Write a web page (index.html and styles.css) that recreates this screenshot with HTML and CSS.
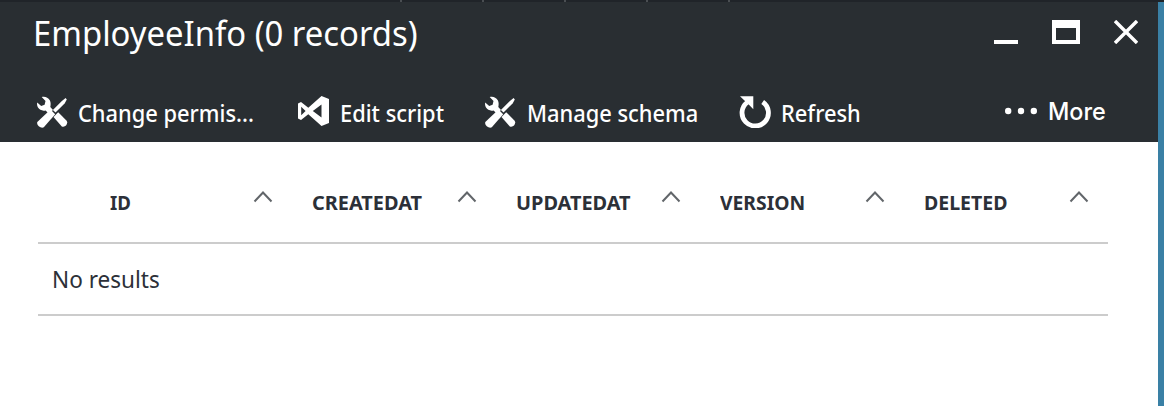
FILE: index.html
```html
<!DOCTYPE html>
<html lang="en">
<head>
<meta charset="utf-8">
<title>EmployeeInfo</title>
<link rel="stylesheet" href="styles.css">
</head>
<body>
<svg class="defs" aria-hidden="true">
  <symbol id="tools" viewBox="0 0 32 32">
    <path d="M5.700 1C8.500 .1 12 1 13.800 4.300C15 6.600 14.700 9.200 14.300 11L17 14L12.800 17.800L9.600 14.400C6.500 15.200 3.500 14 2 11.600C1.100 10 .8 8 1.200 6.500L5.200 9.900L8.600 8.800L9.500 5Z"/>
    <path d="M29.600 2.100L30.800 3.400L28.600 7.500L19.500 16.600L16.900 14L25.900 5Z"/>
    <path d="M14.500 13.500L19.200 18.200L7.800 31.200C5 33 .2 29 1.300 26Z"/>
    <path d="M17.500 20.900L22.200 16.300L30.400 24.400C32.900 27.500 29 32.200 25.800 30.400Z"/>
  </symbol>
</svg>
<div class="page">
  <main class="blade">
    <div class="strip"><i></i><i></i><i></i><i></i><i></i></div>
    <header class="titlebar">
      <h1 class="title">EmployeeInfo (0 records)</h1>
      <div class="controls">
        <svg width="24" height="24" viewBox="0 0 24 24"><path d="M0 20H24V24H0Z"/></svg>
        <svg width="28" height="24" viewBox="0 0 28 24"><path fill-rule="evenodd" d="M0 0H28V24H0ZM4 8V20H24V8Z"/></svg>
        <svg width="24" height="24" viewBox="0 0 24 24"><path class="line" d="M1 1L23 23M23 1L1 23"/></svg>
      </div>
    </header>
    <nav class="toolbar">
      <a class="command change"><svg width="32" height="32"><use href="#tools"/></svg><span>Change permis...</span></a>
      <a class="command edit"><svg width="32" height="32" viewBox="0 0 32 32"><path fill-rule="evenodd" d="M23.500 0L31 3V27L23.500 30L10.300 18.300L3 24L0 22.500V7.500L3 6L10.300 11.700ZM3.200 10.700V19.300L7.600 15ZM23.500 8.500L14.800 15L23.500 21.500Z"/></svg><span>Edit script</span></a>
      <a class="command manage"><svg width="32" height="32"><use href="#tools"/></svg><span>Manage schema</span></a>
      <a class="command refresh"><svg width="32" height="32" viewBox="0 0 32 32"><path d="M1 .3H14.300V13.300L10.700 9.600Z"/><path class="arc" d="M8.200 6.300A13.200 13.200 0 1 0 23.700 5.900"/></svg><span>Refresh</span></a>
      <a class="command more"><svg width="32" height="8" viewBox="0 0 32 8"><circle cx="3.200" cy="4" r="3.200"/><circle cx="16" cy="4" r="3.200"/><circle cx="28.800" cy="4" r="3.200"/></svg><span>More</span></a>
    </nav>
    <section class="grid">
      <div class="head">
        <div class="cell id"><span>ID</span><svg class="caret" width="20" height="12" viewBox="0 0 20 12"><path d="M1.500 10.500L10 1.500L18.500 10.500"/></svg></div>
        <div class="cell created"><span>CREATEDAT</span><svg class="caret" width="20" height="12" viewBox="0 0 20 12"><path d="M1.500 10.500L10 1.500L18.500 10.500"/></svg></div>
        <div class="cell updated"><span>UPDATEDAT</span><svg class="caret" width="20" height="12" viewBox="0 0 20 12"><path d="M1.500 10.500L10 1.500L18.500 10.500"/></svg></div>
        <div class="cell version"><span>VERSION</span><svg class="caret" width="20" height="12" viewBox="0 0 20 12"><path d="M1.500 10.500L10 1.500L18.500 10.500"/></svg></div>
        <div class="cell deleted"><span>DELETED</span><svg class="caret" width="20" height="12" viewBox="0 0 20 12"><path d="M1.500 10.500L10 1.500L18.500 10.500"/></svg></div>
      </div>
      <div class="empty"><span>No results</span></div>
    </section>
  </main>
</div>
</body>
</html>
```
FILE: styles.css
```css
* { box-sizing: border-box; }
body { margin: 0; font-family: "Noto Sans", "Open Sans", sans-serif; color: #2c3038; }
.defs { position: absolute; width: 0; height: 0; }
.page { width: 1164px; height: 406px; overflow: hidden; background: #3a80a5; }
.blade { width: 1158px; height: 406px; background: #fff; }
svg { display: block; flex: none; fill: #fff; }
span, .title { white-space: nowrap; transform-origin: left center; }
.strip { display: flex; gap: 80px; width: 1164px; height: 2px; padding-left: 400px; background: #202429; }
.strip i { width: 2px; background: #4a4e52; }
.titlebar { display: flex; justify-content: space-between; height: 78px; padding: 8px 20px 0 33px; background: #292e32; color: #fff; }
.title { margin: 0; height: 46px; width: 390px; font-size: 35px; font-weight: 400; line-height: 46px; transform: scaleX(.938); }
.controls { display: flex; justify-content: space-between; width: 144px; padding-top: 10px; }
.line { fill: none; stroke: #fff; stroke-width: 3.400; }
.toolbar { display: flex; height: 62px; background: #292e32; color: #fff; padding: 16px 0 0 36px; }
.command { display: flex; flex: none; height: 34px; font-size: 24px; font-weight: 500; line-height: 34px; }
.change { width: 261px; gap: 10px; }
.edit { width: 187px; gap: 10px; padding-left: 1px; }
.manage { width: 255px; gap: 11px; }
.refresh { width: 266px; gap: 10px; }
.more { gap: 11px; }
.more svg { margin-top: 11px; }
.more span { font-family: Inter, sans-serif; line-height: 32px; }
.command span { transform: scaleX(.91); }
.command.more span { transform: scaleX(.975); }
.arc { fill: none; stroke: #fff; stroke-width: 4.800; }
.grid { width: 1070px; margin-left: 38px; }
.head { display: flex; height: 102px; padding: 48px 0 0 72px; border-bottom: 2px solid #ccc; font-size: 20px; font-weight: 700; line-height: 26px; }
.cell { display: flex; flex: none; justify-content: space-between; width: 204px; padding-right: 39px; }
.cell.id { width: 202px; padding-right: 39px; }
.caret { margin-top: 1px; fill: none; stroke: #62666a; stroke-width: 2; }
.cell span { transform: scaleX(.93); }
.cell.created span, .cell.updated span { transform: scaleX(.995); }
.cell.version span { transform: scaleX(.965); }
.cell.deleted span { transform: scaleX(.975); }
.empty { height: 72px; padding-left: 14px; border-bottom: 2px solid #ccc; font-size: 24px; line-height: 69px; }
.empty span { display: inline-block; transform: scaleX(.94); }
```
